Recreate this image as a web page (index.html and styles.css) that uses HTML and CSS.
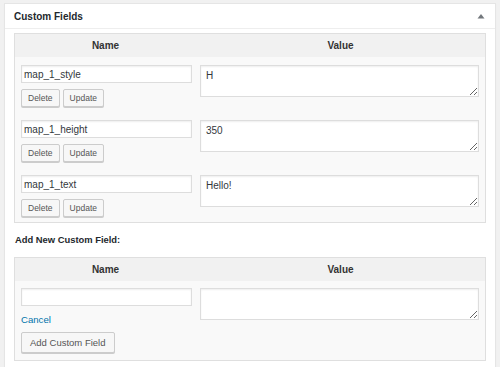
FILE: index.html
```html
<!DOCTYPE html>
<html lang="en">
<head>
    <meta charset="UTF-8">
    <title>Custom Fields</title>
    <link rel="stylesheet" href="styles.css">
</head>
<body>
    <div class="postbox">
        <div class="postbox-header">
            <h2>Custom Fields</h2>
            <svg class="toggle" width="8" height="6" viewBox="0 0 8 6"><path d="M0.5 5.5 L4 1 L7.5 5.5 Z" fill="#72777c"/></svg>
        </div>
        <div class="inside">
            <!-- Existing fields -->
            <div class="fields">
                <div class="fields-head">
                    <div>Name</div>
                    <div>Value</div>
                </div>
                <div class="field-row">
                    <div class="key-cell">
                        <input type="text" class="key" value="map_1_style">
                        <div class="actions">
                            <button class="btn btn-small">Delete</button>
                            <button class="btn btn-small">Update</button>
                        </div>
                    </div>
                    <div class="value-cell"><textarea>H</textarea></div>
                </div>
                <div class="field-row">
                    <div class="key-cell">
                        <input type="text" class="key" value="map_1_height">
                        <div class="actions">
                            <button class="btn btn-small">Delete</button>
                            <button class="btn btn-small">Update</button>
                        </div>
                    </div>
                    <div class="value-cell"><textarea>350</textarea></div>
                </div>
                <div class="field-row">
                    <div class="key-cell">
                        <input type="text" class="key" value="map_1_text">
                        <div class="actions">
                            <button class="btn btn-small">Delete</button>
                            <button class="btn btn-small">Update</button>
                        </div>
                    </div>
                    <div class="value-cell"><textarea>Hello!</textarea></div>
                </div>
            </div>

            <!-- New field -->
            <p class="add-title">Add New Custom Field:</p>
            <div class="fields">
                <div class="fields-head">
                    <div>Name</div>
                    <div>Value</div>
                </div>
                <div class="field-row new-row">
                    <div class="key-cell">
                        <input type="text" class="key">
                        <a href="#" class="cancel">Cancel</a>
                        <button class="btn">Add Custom Field</button>
                    </div>
                    <div class="value-cell"><textarea></textarea></div>
                </div>
            </div>
        </div>
    </div>
</body>
</html>
```

FILE: styles.css
```css
* {
    margin: 0;
    padding: 0;
    box-sizing: border-box;
}

body {
    font-family: "Liberation Sans", Arial, sans-serif;
    font-size: 10px;
    color: #23282d;
    background: #f1f1f1;
    padding: 3px 4px 0 4px;
    height: 367px;
    overflow: hidden;
}

.postbox {
    background: #fff;
    border: 1px solid #e5e5e5;
    box-shadow: 0 1px 1px rgba(0, 0, 0, 0.04);
    width: 492px;
    height: 380px;
}

.postbox-header {
    display: flex;
    justify-content: space-between;
    align-items: center;
    height: 25px;
    padding: 0 10px 0 9px;
    border-bottom: 1px solid #eee;
}

.postbox-header h2 {
    font-size: 10px;
    font-weight: bold;
}

.toggle {
    margin-top: -1px;
}

.inside {
    padding: 4px 9px 0 9px;
}

.fields {
    border: 1px solid #dfdfdf;
    background: #f9f9f9;
    width: 472px;
}

.fields-head {
    display: grid;
    grid-template-columns: 181px 1fr;
    height: 23px;
    align-items: center;
    background: #f1f1f1;
    font-size: 10px;
    font-weight: bold;
    text-align: center;
    color: #333;
}

.field-row {
    display: grid;
    grid-template-columns: 181px 1fr;
    padding: 8px 0 5px 0;
}

.key-cell {
    padding-left: 6px;
}

.value-cell {
    padding: 0 6px 0 4px;
}

input.key {
    display: block;
    width: 171px;
    height: 18px;
    border: 1px solid #ddd;
    box-shadow: inset 0 1px 2px rgba(0, 0, 0, 0.07);
    background: #fff;
    font-family: inherit;
    font-size: 10px;
    color: #32373c;
    padding: 0 2px;
    outline: none;
}

textarea {
    display: block;
    width: 100%;
    height: 32px;
    border: 1px solid #ddd;
    box-shadow: inset 0 1px 2px rgba(0, 0, 0, 0.07);
    background: #fff;
    font-family: inherit;
    font-size: 10px;
    color: #32373c;
    padding: 4px 5px;
    outline: none;
}

.actions {
    display: flex;
    gap: 3px;
    margin-top: 6px;
}

.btn {
    background: #f7f7f7;
    border: 1px solid #ccc;
    border-radius: 2px;
    box-shadow: 0 1px 0 #ccc;
    color: #555;
    font-family: inherit;
    font-size: 9.5px;
    height: 21px;
    padding: 0 8px;
    cursor: pointer;
}

.btn-small {
    font-size: 8.5px;
    height: 18px;
    padding: 0 6px;
}

.add-title {
    font-weight: bold;
    font-size: 9.4px;
    line-height: 14px;
    margin: 10px 0 10px 1px;
}

.new-row {
    padding: 7px 0 7px 0;
}

.cancel {
    display: block;
    color: #0073aa;
    text-decoration: none;
    font-size: 9.6px;
    line-height: 13px;
    margin: 7px 0 6px 0;
}
```
